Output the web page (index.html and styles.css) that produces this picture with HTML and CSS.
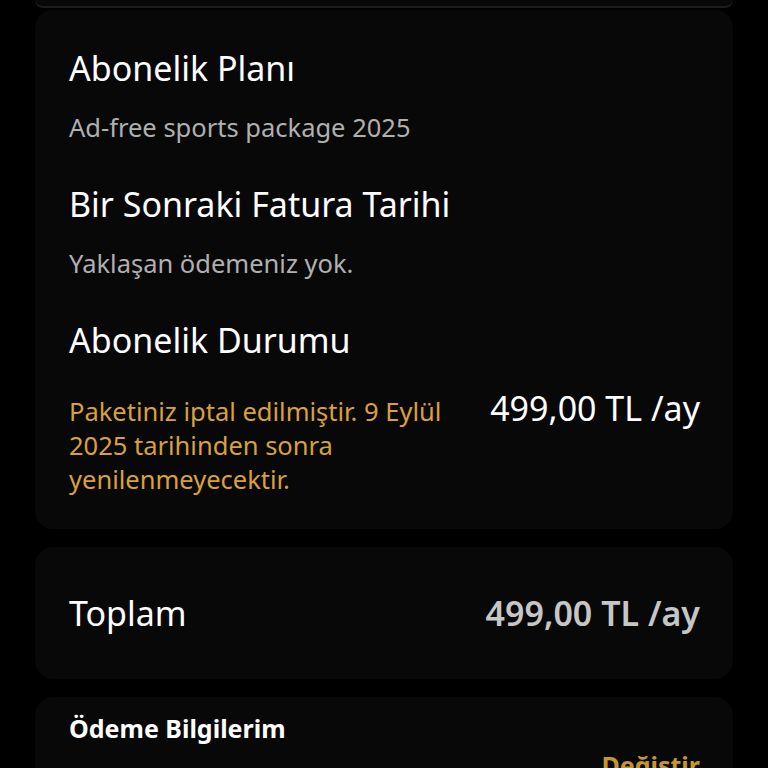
FILE: index.html
```html
<!DOCTYPE html>
<html lang="tr">
<head>
<meta charset="utf-8">
<link rel="stylesheet" href="styles.css">
</head>
<body>
<main class="page">
  <div class="card-tail"></div>
  <section class="card card-plan">
    <div class="block">
      <h2 class="title">Abonelik Planı</h2>
      <p class="sub">Ad-free sports package 2025</p>
    </div>
    <div class="block">
      <h2 class="title">Bir Sonraki Fatura Tarihi</h2>
      <p class="sub">Yaklaşan ödemeniz yok.</p>
    </div>
    <div class="block">
      <h2 class="title">Abonelik Durumu</h2>
      <div class="status-row">
        <p class="warn">Paketiniz iptal edilmiştir. 9 Eylül 2025 tarihinden sonra yenilenmeyecektir.</p>
        <span class="price">499,00 TL /ay</span>
      </div>
    </div>
  </section>
  <section class="card card-total">
    <span class="total-label">Toplam</span>
    <span class="total-price">499,00 TL /ay</span>
  </section>
  <section class="card card-pay">
    <h3 class="pay-title">Ödeme Bilgilerim</h3>
    <div class="pay-action"><span class="change">Değiştir</span></div>
  </section>
</main>
</body>
</html>
```

FILE: styles.css
```css
* { box-sizing: border-box; }
html, body {
  margin: 0;
  padding: 0;
  background: #000;
  height: 100%;
  overflow: hidden;
}
body {
  font-family: "Noto Sans", "Open Sans", sans-serif;
  color: #fff;
}
.page {
  display: flex;
  flex-direction: column;
  padding: 0 35px;
}
.card-tail {
  height: 8px;
  background: #080808;
  border-bottom: 2px solid #1d1d1d;
  border-radius: 0 0 12px 12px;
}
.card {
  background: #080808;
  border-radius: 18px;
}
.card-plan {
  margin-top: 2px;
  padding: 38px 33px 33px 34px;
  display: flex;
  flex-direction: column;
  gap: 41px;
}
.block {
  display: flex;
  flex-direction: column;
  gap: 23px;
}
.title {
  margin: 0;
  font-weight: 400;
  font-size: 34px;
  line-height: 40px;
}
.sub {
  margin: 0;
  font-size: 25.5px;
  line-height: 32px;
  color: #b0b0b0;
}
.status-row {
  display: flex;
  justify-content: space-between;
  align-items: flex-start;
  gap: 20px;
  margin-top: 11px;
}
.warn {
  margin: 0;
  width: 396px;
  font-size: 25.5px;
  line-height: 34px;
  color: #d9a13b;
}
.price {
  font-size: 34px;
  line-height: 28px;
  white-space: nowrap;
}
.card-total {
  margin-top: 18px;
  height: 132px;
  padding: 0 33px 0 34px;
  display: flex;
  justify-content: space-between;
  align-items: center;
}
.total-label {
  font-size: 34px;
}
.total-price {
  font-size: 34px;
  font-weight: 600;
  color: #c6c6c6;
}
.card-pay {
  margin-top: 18px;
  padding: 14px 33px 0 34px;
  height: 100px;
}
.pay-title {
  margin: 0;
  font-size: 25px;
  font-weight: 700;
  line-height: 34px;
}
.pay-action {
  display: flex;
  justify-content: flex-end;
  margin-top: 3px;
}
.change {
  font-size: 25px;
  font-weight: 700;
  color: #c4962f;
  line-height: 34px;
}
```
